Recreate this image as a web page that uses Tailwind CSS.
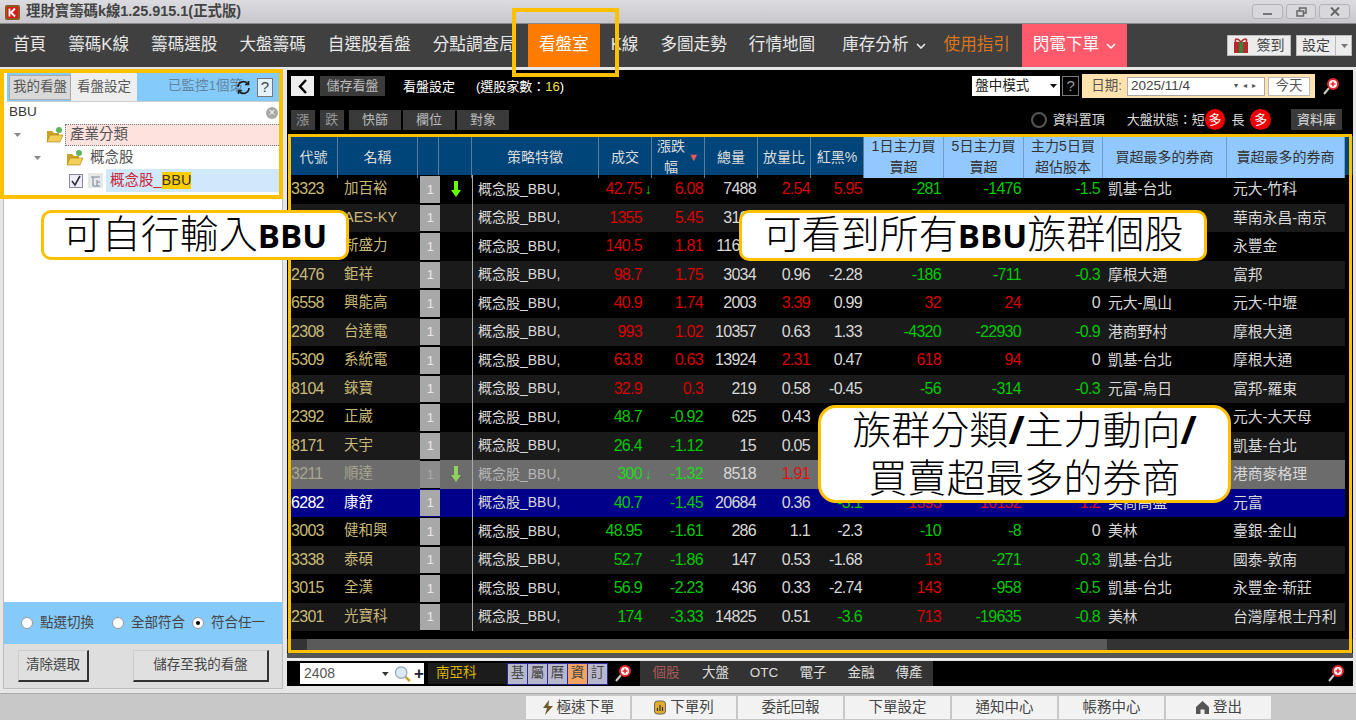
<!DOCTYPE html>
<html lang="zh-Hant">
<head>
<meta charset="UTF-8">
<title>理財寶籌碼k線</title>
<script src="https://cdn.jsdelivr.net/npm/@tailwindcss/browser@4"></script>
</head>
<body class="bg-[#e6e6e6]">
<div class="relative w-[1356px] h-[720px] overflow-hidden flex flex-col font-['Liberation_Sans','Noto_Sans_CJK_TC',sans-serif] text-[14px]">

  <!-- title bar -->
  <div class="h-[24px] shrink-0 flex items-center bg-gradient-to-b from-[#dcdce0] to-[#c8c8cc] border-b border-[#8a8a8a] pl-[4px]">
    <svg width="17" height="18" viewBox="0 0 17 18"><rect x="1" y="2" width="15" height="15" rx="2" fill="#8a5a20"/><rect x="3" y="4" width="11" height="11" fill="#d81c1c"/><path d="M5.5 5.5v8M11 5.5 7 9.5l4 4" stroke="#fff" stroke-width="1.8" fill="none"/></svg>
    <span class="ml-[5px] text-[14.4px] font-semibold text-[#444]">理財寶籌碼k線1.25.915.1(正式版)</span>
    <div class="ml-auto mr-[6px] flex gap-[3px]">
      <div class="w-[31px] h-[15px] rounded-[3px] border border-[#b4b4b8] bg-[#d8d8dc] flex items-center justify-center"><div class="w-[9px] h-[2px] mt-[5px] bg-[#777]"></div></div>
      <div class="w-[30px] h-[15px] rounded-[3px] border border-[#b4b4b8] bg-[#d8d8dc] flex items-center justify-center"><svg width="11" height="10" viewBox="0 0 11 10" fill="none" stroke="#666" stroke-width="1.5"><rect x="3.5" y="1" width="6.5" height="5"/><rect x="1" y="4" width="6.5" height="5" fill="#d8d8dc"/></svg></div>
      <div class="w-[31px] h-[15px] rounded-[3px] border border-[#b4b4b8] bg-[#d8d8dc] flex items-center justify-center"><svg width="10" height="9" viewBox="0 0 10 9" stroke="#666" stroke-width="2"><path d="M1 0.5 9 8.5M9 0.5 1 8.5"/></svg></div>
    </div>
  </div>

  <!-- nav -->
  <div class="h-[43px] shrink-0 flex items-center bg-[#404040] text-[16.6px] text-[#e8e8e8] pl-[2px]">
    <span class="px-[11px]">首頁</span>
    <span class="px-[11px]">籌碼K線</span>
    <span class="px-[11px]">籌碼選股</span>
    <span class="px-[11px]">大盤籌碼</span>
    <span class="px-[11px]">自選股看盤</span>
    <span class="pl-[11px] w-[106px] whitespace-nowrap">分點調查局</span>
    <span class="w-[72px] h-full flex items-center justify-center bg-[#ff7c00] text-white">看盤室</span>
    <span class="px-[11px]">K線</span>
    <span class="px-[11px]">多圖走勢</span>
    <span class="px-[11px]">行情地圖</span>
    <span class="pl-[16px] pr-[7px]">庫存分析</span>
    <svg width="10" height="6" viewBox="0 0 10 6" fill="none" stroke="#e8e8e8" stroke-width="1.6"><path d="M1 1l4 4 4-4"/></svg>
    <span class="pl-[18px] text-[#d9751e]">使用指引</span>
    <span class="ml-[12px] w-[105px] h-full flex items-center justify-center gap-[7px] bg-[#ff5a6c] text-white">閃電下單<svg width="10" height="6" viewBox="0 0 10 6" fill="none" stroke="#fff" stroke-width="1.6"><path d="M1 1l4 4 4-4"/></svg></span>
    <div class="ml-[100px] w-[64px] h-[21px] flex items-center justify-center gap-[7px] bg-[#ececec] border border-[#bbb] text-[14px] text-[#444]">
      <svg width="16" height="17" viewBox="0 0 16 17"><rect x="1" y="5" width="14" height="11" fill="#b52a2a"/><rect x="6" y="5" width="4" height="11" fill="#2d8a3e"/><path d="M8 5C4 0 1 2 3 5M8 5c4-5 7-3 5 0" fill="none" stroke="#b52a2a" stroke-width="1.5"/></svg>簽到
    </div>
    <div class="ml-[5px] w-[56px] h-[21px] flex items-center bg-[#ececec] border border-[#bbb] text-[14px] text-[#444]">
      <span class="w-[39px] text-center border-r border-[#bbb]">設定</span>
      <svg class="ml-[5px]" width="7" height="4" viewBox="0 0 7 4"><path d="M0 0h7L3.5 4z" fill="#777"/></svg>
    </div>
  </div>

  <!-- content -->
  <div class="flex-1 flex pt-[3px] pl-[3px] min-h-0">

    <!-- left panel -->
    <div class="w-[280px] h-[619px] flex flex-col bg-white border border-[#bdbdbd] pl-[3px] pr-[1px]">
      <div class="h-[30px] shrink-0 flex items-end bg-[#84cbfb] pl-[2px] text-[13.5px]">
        <span class="w-[62px] h-[25px] mb-[1px] flex items-center justify-center bg-[#d8d8d8] border border-[#aaa] text-[#555]">我的看盤</span>
        <span class="w-[66px] h-[28px] flex items-center justify-center bg-[#eeeeee] text-[#555]">看盤設定</span>
        <span class="ml-[31px] w-[68px] h-full flex items-center whitespace-nowrap text-[#64849c]">已監控1個策</span>
        <svg class="mb-[6px]" width="15" height="15" viewBox="0 0 15 15" fill="none" stroke="#222" stroke-width="1.7"><path d="M2 7a5.5 5.5 0 0 1 10-3M13 8a5.5 5.5 0 0 1-10 3"/><path d="M12.5 1v3.5H9M2.500 14v-3.500H6"/></svg>
        <span class="ml-[6px] mb-[4px] w-[16px] h-[19px] flex items-center justify-center bg-[#e4f2fc] border border-[#777] text-[15px] text-[#444]">?</span>
      </div>
      <div class="h-[22px] shrink-0 flex items-center justify-between pl-[2px] pr-[3px] border-t border-[#ccc] text-[13.5px] text-[#333]">BBU
        <span class="w-[12px] h-[12px] rounded-full bg-[#a8a8a8] text-white text-[11px] leading-[11px] text-center">×</span>
      </div>
      <div class="h-[23px] shrink-0 flex items-center">
        <svg class="ml-[7px]" width="7" height="4" viewBox="0 0 7 4"><path d="M0 0h7L3.500 4z" fill="#888"/></svg>
        <svg class="ml-[25px]" width="18" height="18" viewBox="0 0 18 18"><path d="M1 16V5h5l2 2h5v9z" fill="#c9a227"/><path d="M1 16l3-7h13l-3 7z" fill="#f2cf55" stroke="#a98516" stroke-width=".6"/><circle cx="13" cy="4" r="3" fill="#5fb85f"/></svg>
        <span class="ml-[1px] flex-1 h-[22px] flex items-center pl-[4px] bg-[#fde2de] border border-dotted border-[#777] text-[14.5px] text-[#555]">產業分類</span>
      </div>
      <div class="h-[23px] shrink-0 flex items-center">
        <svg class="ml-[27px]" width="7" height="4" viewBox="0 0 7 4"><path d="M0 0h7L3.500 4z" fill="#888"/></svg>
        <svg class="ml-[25px]" width="18" height="18" viewBox="0 0 18 18"><path d="M1 16V5h5l2 2h5v9z" fill="#c9a227"/><path d="M1 16l3-7h13l-3 7z" fill="#f2cf55" stroke="#a98516" stroke-width=".6"/><circle cx="13" cy="4" r="3" fill="#5fb85f"/></svg>
        <span class="ml-[6px] text-[14.5px] text-[#555]">概念股</span>
      </div>
      <div class="h-[23px] shrink-0 flex items-center">
        <svg class="ml-[62px]" width="14" height="14" viewBox="0 0 14 14"><rect x=".5" y=".5" width="13" height="13" fill="#eef" stroke="#889"/><path d="M3 7l3 4 5-9" fill="none" stroke="#333" stroke-width="1.600"/></svg>
        <svg class="ml-[5px]" width="15" height="15" viewBox="0 0 15 15"><rect width="15" height="15" fill="#e8e8e8"/><path d="M3 4h9M5 4v9M9 7v6M5 13h7M9 9h3" stroke="#789" stroke-width="1" fill="none"/></svg>
        <span class="ml-[3px] flex-1 h-[23px] flex items-center pl-[4px] bg-[#cfe9fb] text-[14.5px] text-[#c8283c]">概念股_<span class="bg-[#ffcc00] text-[#333] h-[17px] leading-[17px]">BBU</span></span>
      </div>
      <div class="flex-1"></div>
      <div class="h-[42px] shrink-0 -ml-[3px] -mr-[1px] flex items-center bg-[#84cbfb] text-[13.5px] text-[#444]">
        <span class="ml-[17px] w-[12px] h-[12px] rounded-full bg-white border border-[#999]"></span><span class="ml-[7px]">點選切換</span>
        <span class="ml-[18px] w-[12px] h-[12px] rounded-full bg-white border border-[#999]"></span><span class="ml-[7px]">全部符合</span>
        <span class="ml-[7px] w-[12px] h-[12px] rounded-full bg-white border border-[#999] flex items-center justify-center"><span class="w-[4px] h-[4px] rounded-full bg-black"></span></span><span class="ml-[7px]">符合任一</span>
      </div>
      <div class="h-[44px] shrink-0 -ml-[3px] -mr-[1px] flex items-center bg-[#dedede] text-[13.5px] text-[#444]">
        <span class="ml-[14px] w-[71px] h-[32px] flex items-center justify-center bg-[#e0e0e0] border border-[#ccc] border-r-2 border-b-2 border-r-[#333] border-b-[#333]">清除選取</span>
        <span class="ml-[44px] w-[136px] h-[32px] flex items-center justify-center bg-[#e0e0e0] border border-[#ccc] border-r-2 border-b-2 border-r-[#333] border-b-[#333]">儲存至我的看盤</span>
      </div>
    </div>

    <!-- splitter -->
    <div class="w-[4px] flex items-center justify-center pb-[260px]"><span class="text-[7px] text-[#555]">◂</span></div>

    <!-- right column -->
    <div class="w-[1066px] flex flex-col">
      <!-- toolbar -->
      <div class="h-[66px] shrink-0 bg-black flex flex-col pl-[4px] pr-[11px] pt-[6px] text-[13px]">
        <div class="h-[26px] flex items-start text-white">
          <span class="w-[23px] h-[20px] flex items-center justify-center bg-[#eee]"><svg width="10" height="15" viewBox="0 0 10 15" fill="none" stroke="#000" stroke-width="2.500"><path d="M8 1 2 7.500 8 14"/></svg></span>
          <span class="ml-[6px] w-[65px] h-[20px] flex items-center justify-center bg-[#3a3a3a] text-[#bbb]">儲存看盤</span>
          <span class="ml-[18px] h-[22px] flex items-center">看盤設定</span>
          <span class="ml-[21px] h-[22px] flex items-center">(選股家數：<span class="text-[#f0e040]">16</span>)</span>
          <span class="ml-[408px] w-[88px] h-[20px] flex items-center justify-between px-[3px] bg-white text-[#222] text-[13.5px]">盤中模式<svg width="7" height="4" viewBox="0 0 7 4"><path d="M0 0h7L3.500 4z" fill="#111"/></svg></span>
          <span class="ml-[2px] w-[17px] h-[20px] flex items-center justify-center border border-[#777] text-[#999] text-[15px]">?</span>
          <div class="ml-[3px] -mt-[2px] w-[233px] h-[24px] flex items-center bg-[#ffe2ad] text-[#555] text-[13.5px]">
            <span class="ml-[9px]">日期:</span>
            <span class="ml-[5px] w-[138px] h-[19px] flex items-center justify-between px-[3px] bg-white border border-[#aaa] text-[#444]">2025/11/4<span class="text-[8px] tracking-[5px] text-[#555]">▾◂▸</span></span>
            <span class="ml-[3px] w-[42px] h-[19px] flex items-center justify-center bg-white border border-[#bbb]">今天</span>
          </div>
          <svg class="ml-[7px] mt-[2px]" width="17" height="17" viewBox="0 0 17 17"><path d="M2 16l5-6" stroke="#ccc" stroke-width="2"/><circle cx="11" cy="6" r="5" fill="#fff" stroke="#e8242c" stroke-width="2"/><path d="M8.500 6h5M11 3.500v5" stroke="#e8242c" stroke-width="1.500"/></svg>
        </div>
        <div class="h-[21px] mt-[7px] flex items-center">
          <span class="w-[24px] h-[20px] flex items-center justify-center bg-[#3a3a3a] text-[#999]">漲</span>
          <span class="ml-[5px] w-[25px] h-[20px] flex items-center justify-center bg-[#3a3a3a] text-[#999]">跌</span>
          <span class="ml-[5px] w-[53px] h-[20px] flex items-center justify-center bg-[#3a3a3a] text-[#bbb]">快篩</span>
          <span class="ml-[2px] w-[53px] h-[20px] flex items-center justify-center bg-[#3a3a3a] text-[#bbb]">欄位</span>
          <span class="ml-[2px] w-[53px] h-[20px] flex items-center justify-center bg-[#3a3a3a] text-[#bbb]">對象</span>
          <span class="ml-[522px] w-[16px] h-[16px] rounded-full border-2 border-[#555]"></span>
          <span class="ml-[6px] w-[52px] whitespace-nowrap text-[#ddd]">資料置頂</span>
          <span class="ml-[22px] w-[78px] whitespace-nowrap text-[#ddd]">大盤狀態：短</span>
          <span class="w-[21px] h-[21px] rounded-full bg-[#ee0000] flex items-center justify-center text-white">多</span>
          <span class="ml-[6px] text-[#ddd]">長</span>
          <span class="ml-[6px] w-[21px] h-[21px] rounded-full bg-[#ee0000] flex items-center justify-center text-white">多</span>
          <span class="ml-[20px] w-[52px] h-[21px] flex items-center justify-center bg-[#3a3a3a] text-[#ddd]">資料庫</span>
        </div>
      </div>

      <!-- table -->
      <div class="h-[517px] shrink-0 bg-black pl-[3px] flex flex-col overflow-hidden">
        <div class="h-[39px] shrink-0 grid grid-cols-[48px_80px_21px_33px_127px_53px_53px_53px_53px_53px_80px_80px_79px_124px_118px] text-center text-[14px] leading-[21px] text-[#dcdcdc] bg-[#00457a] [&>span]:border-r [&>span]:border-[#5a7d9a] [&>span]:flex [&>span]:items-center [&>span]:justify-center">
          <span>代號</span><span>名稱</span><span></span><span></span><span>策略特徵</span><span>成交</span>
          <span class="gap-[3px]">漲跌<br>幅<b class="text-[#e85a5a] text-[11px] font-normal">▼</b></span>
          <span>總量</span><span>放量比</span><span>紅黑%</span>
          <span class="bg-[#90c8ff] !border-[#6f9cc4] text-[#333]">1日主力買<br>賣超</span>
          <span class="bg-[#90c8ff] !border-[#6f9cc4] text-[#333]">5日主力買<br>賣超</span>
          <span class="bg-[#90c8ff] !border-[#6f9cc4] text-[#333]">主力5日買<br>超佔股本</span>
          <span class="bg-[#90c8ff] !border-[#6f9cc4] text-[#333]">買超最多的券商</span>
          <span class="bg-[#90c8ff] !border-[#6f9cc4] text-[#333]">賣超最多的券商</span>
        </div>
        <div class="w-[1055px] text-[16px] tracking-[-0.7px] whitespace-nowrap text-[#d8d8d8]
          [&>div]:grid [&>div]:h-[28.5px] [&>div]:items-center [&>div]:grid-cols-[48px_80px_21px_33px_127px_53px_53px_53px_53px_53px_80px_80px_79px_124px_118px] [&>div:nth-child(even)]:bg-[#1a1a1a]
          [&>div>span:nth-child(-n+2)]:text-[#c8b97a] [&>div>span:nth-child(1)]:pl-[1px] [&>div>span:nth-child(2)]:pl-[6px] [&>div>span:nth-child(2)]:text-[14.5px] [&>div>span:nth-child(2)]:tracking-normal
          [&>div>span:nth-child(3)]:h-full [&>div>span:nth-child(3)]:ml-[2px] [&>div>span:nth-child(3)]:-mr-[1px] [&>div>span:nth-child(3)]:border-y [&>div>span:nth-child(3)]:border-black [&>div>span:nth-child(3)]:bg-[#a8a8a8] [&>div>span:nth-child(3)]:text-[#e8e8e8] [&>div>span:nth-child(3)]:text-[13px] [&>div>span:nth-child(3)]:flex [&>div>span:nth-child(3)]:items-center [&>div>span:nth-child(3)]:justify-center
          [&>div>span:nth-child(4)]:flex [&>div>span:nth-child(4)]:justify-center
          [&>div>span:nth-child(5)]:h-full [&>div>span:nth-child(5)]:flex [&>div>span:nth-child(5)]:items-center [&>div>span:nth-child(5)]:border-l [&>div>span:nth-child(5)]:border-[#aaa] [&>div>span:nth-child(5)]:pl-[5px] [&>div>span:nth-child(5)]:text-[14px] [&>div>span:nth-child(5)]:tracking-normal
          [&>div>span:nth-child(n+6)]:text-right [&>div>span:nth-child(6)]:pr-[10px] [&>div>span:nth-child(7)]:pr-[2px] [&>div>span:nth-child(8)]:pr-[2px] [&>div>span:nth-child(9)]:pr-[1px] [&>div>span:nth-child(10)]:pr-[2px] [&>div>span:nth-child(11)]:pr-[3px] [&>div>span:nth-child(12)]:pr-[3px] [&>div>span:nth-child(13)]:pr-[3px]
          [&>div>span:nth-child(n+14)]:!text-left [&>div>span:nth-child(n+14)]:text-[14.8px] [&>div>span:nth-child(n+14)]:tracking-normal [&>div>span:nth-child(14)]:pl-[5px] [&>div>span:nth-child(15)]:pl-[6px]">
          <div><span>3323</span><span>加百裕</span><span>1</span><span><svg width="10" height="16" viewBox="0 0 10 16"><path d="M3 0h4v9h3l-5 7-5-7h3z" fill="#66ff00"/></svg></span><span>概念股_BBU,</span><span class="text-[#d80000]">42.75<i class="inline-block w-[9px] -mr-[9px] not-italic text-[#33cc33] text-[14px]">↓</i></span><span class="text-[#d80000]">6.08</span><span>7488</span><span class="text-[#d80000]">2.54</span><span class="text-[#d80000]">5.95</span><span class="text-[#00c800]">-281</span><span class="text-[#00c800]">-1476</span><span class="text-[#00c800]">-1.5</span><span>凱基-台北</span><span>元大-竹科</span></div>
          <div><span>6781</span><span>AES-KY</span><span>1</span><span></span><span>概念股_BBU,</span><span class="text-[#d80000]">1355</span><span class="text-[#d80000]">5.45</span><span>3101</span><span></span><span></span><span></span><span></span><span></span><span></span><span>華南永昌-南京</span></div>
          <div><span>4931</span><span>新盛力</span><span>1</span><span></span><span>概念股_BBU,</span><span class="text-[#d80000]">140.5</span><span class="text-[#d80000]">1.81</span><span>11600</span><span></span><span></span><span></span><span></span><span></span><span></span><span>永豐金</span></div>
          <div><span>2476</span><span>鉅祥</span><span>1</span><span></span><span>概念股_BBU,</span><span class="text-[#d80000]">98.7</span><span class="text-[#d80000]">1.75</span><span>3034</span><span>0.96</span><span>-2.28</span><span class="text-[#00c800]">-186</span><span class="text-[#00c800]">-711</span><span class="text-[#00c800]">-0.3</span><span>摩根大通</span><span>富邦</span></div>
          <div><span>6558</span><span>興能高</span><span>1</span><span></span><span>概念股_BBU,</span><span class="text-[#d80000]">40.9</span><span class="text-[#d80000]">1.74</span><span>2003</span><span class="text-[#d80000]">3.39</span><span>0.99</span><span class="text-[#d80000]">32</span><span class="text-[#d80000]">24</span><span>0</span><span>元大-鳳山</span><span>元大-中壢</span></div>
          <div><span>2308</span><span>台達電</span><span>1</span><span></span><span>概念股_BBU,</span><span class="text-[#d80000]">993</span><span class="text-[#d80000]">1.02</span><span>10357</span><span>0.63</span><span>1.33</span><span class="text-[#00c800]">-4320</span><span class="text-[#00c800]">-22930</span><span class="text-[#00c800]">-0.9</span><span>港商野村</span><span>摩根大通</span></div>
          <div><span>5309</span><span>系統電</span><span>1</span><span></span><span>概念股_BBU,</span><span class="text-[#d80000]">63.8</span><span class="text-[#d80000]">0.63</span><span>13924</span><span class="text-[#d80000]">2.31</span><span>0.47</span><span class="text-[#d80000]">618</span><span class="text-[#d80000]">94</span><span>0</span><span>凱基-台北</span><span>摩根大通</span></div>
          <div><span>8104</span><span>錸寶</span><span>1</span><span></span><span>概念股_BBU,</span><span class="text-[#d80000]">32.9</span><span class="text-[#d80000]">0.3</span><span>219</span><span>0.58</span><span>-0.45</span><span class="text-[#00c800]">-56</span><span class="text-[#00c800]">-314</span><span class="text-[#00c800]">-0.3</span><span>元富-烏日</span><span>富邦-羅東</span></div>
          <div><span>2392</span><span>正崴</span><span>1</span><span></span><span>概念股_BBU,</span><span class="text-[#00c800]">48.7</span><span class="text-[#00c800]">-0.92</span><span>625</span><span>0.43</span><span></span><span></span><span></span><span></span><span></span><span>元大-大天母</span></div>
          <div><span>8171</span><span>天宇</span><span>1</span><span></span><span>概念股_BBU,</span><span class="text-[#00c800]">26.4</span><span class="text-[#00c800]">-1.12</span><span>15</span><span>0.05</span><span></span><span></span><span></span><span></span><span></span><span>凱基-台北</span></div>
          <div class="!bg-[#6c6c6c] [&>span:nth-child(-n+2)]:!text-[#a8a690] [&>span:nth-child(3)]:!bg-[#8c8c8c] [&>span:nth-child(3)]:!text-[#aaa] [&>span:nth-child(5)]:!text-[#b4b4b4]"><span>3211</span><span>順達</span><span>1</span><span><svg width="10" height="16" viewBox="0 0 10 16"><path d="M3 0h4v9h3l-5 7-5-7h3z" fill="#90d060"/></svg></span><span>概念股_BBU,</span><span class="text-[#20d820]">300<i class="inline-block w-[9px] -mr-[9px] not-italic text-[#33cc33] text-[14px]">↓</i></span><span class="text-[#20d820]">-1.32</span><span>8518</span><span class="text-[#e01010]">1.91</span><span></span><span></span><span></span><span></span><span></span><span>港商麥格理</span></div>
          <div class="!bg-[#00008b] [&>span:nth-child(-n+2)]:!text-white [&>span:nth-child(3)]:!border-[#00008b]"><span>6282</span><span>康舒</span><span>1</span><span></span><span>概念股_BBU,</span><span class="text-[#00c800]">40.7</span><span class="text-[#00c800]">-1.45</span><span>20684</span><span>0.36</span><span class="text-[#00c800]">-3.1</span><span class="text-[#d80030]">1393</span><span class="text-[#d80030]">10132</span><span class="text-[#d80030]">1.2</span><span>美商高盛</span><span>元富</span></div>
          <div><span>3003</span><span>健和興</span><span>1</span><span></span><span>概念股_BBU,</span><span class="text-[#00c800]">48.95</span><span class="text-[#00c800]">-1.61</span><span>286</span><span>1.1</span><span>-2.3</span><span class="text-[#00c800]">-10</span><span class="text-[#00c800]">-8</span><span>0</span><span>美林</span><span>臺銀-金山</span></div>
          <div><span>3338</span><span>泰碩</span><span>1</span><span></span><span>概念股_BBU,</span><span class="text-[#00c800]">52.7</span><span class="text-[#00c800]">-1.86</span><span>147</span><span>0.53</span><span>-1.68</span><span class="text-[#d80000]">13</span><span class="text-[#00c800]">-271</span><span class="text-[#00c800]">-0.3</span><span>凱基-台北</span><span>國泰-敦南</span></div>
          <div><span>3015</span><span>全漢</span><span>1</span><span></span><span>概念股_BBU,</span><span class="text-[#00c800]">56.9</span><span class="text-[#00c800]">-2.23</span><span>436</span><span>0.33</span><span>-2.74</span><span class="text-[#d80000]">143</span><span class="text-[#00c800]">-958</span><span class="text-[#00c800]">-0.5</span><span>凱基-台北</span><span>永豐金-新莊</span></div>
          <div><span>2301</span><span>光寶科</span><span>1</span><span></span><span>概念股_BBU,</span><span class="text-[#00c800]">174</span><span class="text-[#00c800]">-3.33</span><span>14825</span><span>0.51</span><span class="text-[#00c800]">-3.6</span><span class="text-[#d80000]">713</span><span class="text-[#00c800]">-19635</span><span class="text-[#00c800]">-0.8</span><span>美林</span><span>台灣摩根士丹利</span></div>
        </div>
        <div class="mt-[8px] h-[13px] shrink-0 -ml-[3px] bg-[#333]"><div class="ml-[20px] w-[800px] h-full bg-[#5a5a5a]"></div></div>
      </div>
      <div class="h-[7px] shrink-0 bg-[#555] border-b-2 border-[#eee]"></div>

      <!-- bottom strip -->
      <div class="h-[25px] shrink-0 mt-[1px] bg-black flex items-center text-[13.5px]">
        <div class="ml-[13px] w-[124px] h-[21px] flex items-center bg-white text-[#555] text-[14px] pl-[4px]">2408
          <svg class="ml-[47px]" width="7" height="4" viewBox="0 0 7 4"><path d="M0 0h7L3.500 4z" fill="#333"/></svg>
          <svg class="ml-[5px]" width="18" height="18" viewBox="0 0 18 18"><circle cx="7.500" cy="7.500" r="6" fill="#dbe9f5" stroke="#9ab" stroke-width="1.300"/><path d="M12 12l4.500 4.500" stroke="#c9a227" stroke-width="2.500"/></svg>
          <span class="ml-[3px] text-[#223] text-[17px] font-bold leading-none">+</span>
        </div>
        <span class="ml-[4px] w-[79px] h-[21px] flex items-center pl-[8px] bg-[#1c1c1c] text-[#d8b400]">南亞科</span>
        <div class="flex border border-[#2a2a9a] text-[#444]">
          <span class="w-[20px] h-[20px] flex items-center justify-center bg-[#b8b8cc] border-r border-[#2a2a9a]">基</span>
          <span class="w-[20px] h-[20px] flex items-center justify-center bg-[#b8b8cc] border-r border-[#2a2a9a]">屬</span>
          <span class="w-[20px] h-[20px] flex items-center justify-center bg-[#b8b8cc] border-r border-[#2a2a9a]">曆</span>
          <span class="w-[20px] h-[20px] flex items-center justify-center bg-[#f4a460] border-r border-[#2a2a9a]">資</span>
          <span class="w-[19px] h-[20px] flex items-center justify-center bg-[#b8b8cc]">訂</span>
        </div>
        <svg class="ml-[6px]" width="17" height="17" viewBox="0 0 17 17"><path d="M2 16l5-6" stroke="#ccc" stroke-width="2"/><circle cx="11" cy="6" r="5" fill="#fff" stroke="#e8242c" stroke-width="2"/><path d="M8.500 6h5M11 3.500v5" stroke="#e8242c" stroke-width="1.500"/></svg>
        <div class="ml-[9px] h-[25px] flex items-center bg-[#333] text-[#ddd]">
          <span class="w-[52px] text-center text-[#a85a5a]">個股</span>
          <span class="w-[47px] text-center">大盤</span>
          <span class="w-[50px] text-center">OTC</span>
          <span class="w-[48px] text-center">電子</span>
          <span class="w-[48px] text-center">金融</span>
          <span class="w-[48px] text-center">傳產</span>
        </div>
        <svg class="ml-[394px]" width="17" height="17" viewBox="0 0 17 17"><path d="M2 16l5-6" stroke="#ccc" stroke-width="2"/><circle cx="11" cy="6" r="5" fill="#fff" stroke="#e8242c" stroke-width="2"/><path d="M8.500 6h5M11 3.500v5" stroke="#e8242c" stroke-width="1.500"/></svg>
      </div>
    </div>
  </div>

  <!-- bottom bar -->
  <div class="h-[27px] shrink-0 flex items-end bg-[#c8c8c8] border-t border-[#aaa] pl-[526px] gap-[2px] text-[14.5px] text-[#444]">
    <span class="w-[104px] h-[23px] mb-[1px] flex items-center justify-center gap-[3px] bg-[#f2f2f2]"><svg width="12" height="15" viewBox="0 0 12 15"><path d="M7 0 1 8h4l-2 7 8-9H6.500z" fill="#6b5a2a"/></svg>極速下單</span>
    <span class="w-[104px] h-[23px] mb-[1px] flex items-center justify-center gap-[4px] bg-[#f2f2f2]"><svg width="12" height="15" viewBox="0 0 12 15"><rect x=".5" y="1" width="11" height="13" rx="3" fill="#e3ab2a" stroke="#666"/><path d="M3.500 11V8M6 11V5M8.500 11V7" stroke="#333" stroke-width="1.200"/></svg>下單列</span>
    <span class="w-[105px] h-[23px] mb-[1px] flex items-center justify-center bg-[#f2f2f2]">委託回報</span>
    <span class="w-[105px] h-[23px] mb-[1px] flex items-center justify-center bg-[#f2f2f2]">下單設定</span>
    <span class="w-[105px] h-[23px] mb-[1px] flex items-center justify-center bg-[#f2f2f2]">通知中心</span>
    <span class="w-[105px] h-[23px] mb-[1px] flex items-center justify-center bg-[#f2f2f2]">帳務中心</span>
    <span class="w-[105px] h-[23px] mb-[1px] flex items-center justify-center gap-[3px] bg-[#f2f2f2]"><svg width="15" height="15" viewBox="0 0 15 15"><path d="M7.500 1 1 7v7h4.500V9.500h4V14H14V7z" fill="#555"/></svg>登出</span>
  </div>

  <!-- yellow highlight frames -->
  <div class="absolute left-[512px] top-[8px] w-[107px] h-[69px] border-4 border-[#ffc000]"></div>
  <div class="absolute left-0 top-[69px] w-[283px] h-[130px] border-4 border-[#ffc000]"></div>
  <div class="absolute left-[288px] top-[134px] w-[1064px] h-[519px] border-[3.500px] border-[#ffc000]"></div>

  <!-- callouts -->
  <div class="absolute left-[41px] top-[210px] w-[308px] h-[50px] flex items-center justify-center bg-white border-[3px] border-[#ffc000] rounded-[10px] text-[39px] font-light text-black whitespace-nowrap"><span>可自行輸入<b class="font-['Open_Sans'] font-bold text-[33px]">BBU</b></span></div>
  <div class="absolute left-[739px] top-[210px] w-[468px] h-[51px] flex items-center justify-center bg-white border-[3px] border-[#ffc000] rounded-[10px] text-[39px] font-light text-black whitespace-nowrap"><span>可看到所有<b class="font-['Open_Sans'] font-bold text-[33px]">BBU</b>族群個股</span></div>
  <div class="absolute left-[818px] top-[405px] w-[413px] h-[98px] flex items-center justify-center text-center bg-white border-[3px] border-[#ffc000] rounded-[18px] text-[39px] font-light leading-[48px] text-black whitespace-nowrap"><span>族群分類<b class="font-['Open_Sans'] font-bold">/</b>主力動向<b class="font-['Open_Sans'] font-bold">/</b><br>買賣超最多的券商</span></div>
</div>
</body>
</html>
